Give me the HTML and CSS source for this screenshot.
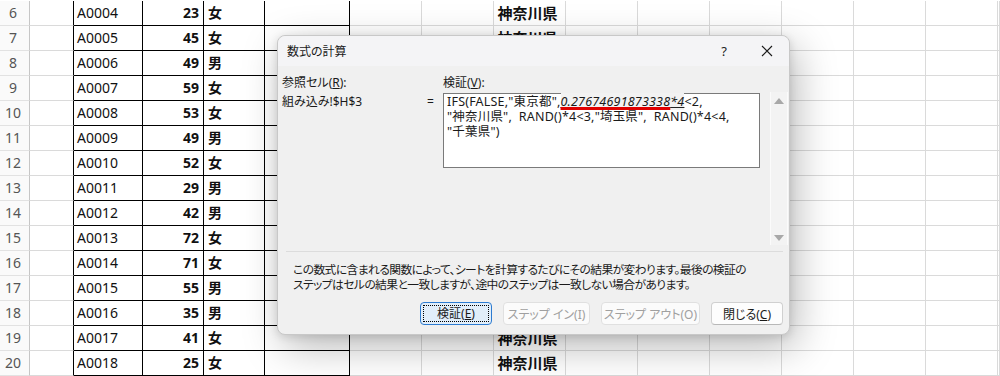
FILE: index.html
```html
<!DOCTYPE html>
<html lang="ja">
<head>
<meta charset="UTF-8">
<title>数式の計算</title>
<link rel="stylesheet" href="styles.css">
</head>
<body>

<div class="sheet">
  <div class="row"><div class="rh">6</div><div class="c"></div><div class="c t id">A0004</div><div class="c t num">23</div><div class="c t sex">女</div><div class="c t last"></div><div class="c"></div><div class="c"></div><div class="c pref">神奈川県</div><div class="c"></div><div class="c"></div><div class="c"></div><div class="c"></div><div class="c"></div><div class="c"></div><div class="c"></div></div>
  <div class="row"><div class="rh">7</div><div class="c"></div><div class="c t id">A0005</div><div class="c t num">45</div><div class="c t sex">女</div><div class="c t last"></div><div class="c"></div><div class="c"></div><div class="c pref">神奈川県</div><div class="c"></div><div class="c"></div><div class="c"></div><div class="c"></div><div class="c"></div><div class="c"></div><div class="c"></div></div>
  <div class="row"><div class="rh">8</div><div class="c"></div><div class="c t id">A0006</div><div class="c t num">49</div><div class="c t sex">男</div><div class="c t last"></div><div class="c"></div><div class="c"></div><div class="c pref"></div><div class="c"></div><div class="c"></div><div class="c"></div><div class="c"></div><div class="c"></div><div class="c"></div><div class="c"></div></div>
  <div class="row"><div class="rh">9</div><div class="c"></div><div class="c t id">A0007</div><div class="c t num">59</div><div class="c t sex">女</div><div class="c t last"></div><div class="c"></div><div class="c"></div><div class="c pref"></div><div class="c"></div><div class="c"></div><div class="c"></div><div class="c"></div><div class="c"></div><div class="c"></div><div class="c"></div></div>
  <div class="row"><div class="rh">10</div><div class="c"></div><div class="c t id">A0008</div><div class="c t num">53</div><div class="c t sex">女</div><div class="c t last"></div><div class="c"></div><div class="c"></div><div class="c pref"></div><div class="c"></div><div class="c"></div><div class="c"></div><div class="c"></div><div class="c"></div><div class="c"></div><div class="c"></div></div>
  <div class="row"><div class="rh">11</div><div class="c"></div><div class="c t id">A0009</div><div class="c t num">49</div><div class="c t sex">男</div><div class="c t last"></div><div class="c"></div><div class="c"></div><div class="c pref"></div><div class="c"></div><div class="c"></div><div class="c"></div><div class="c"></div><div class="c"></div><div class="c"></div><div class="c"></div></div>
  <div class="row"><div class="rh">12</div><div class="c"></div><div class="c t id">A0010</div><div class="c t num">52</div><div class="c t sex">女</div><div class="c t last"></div><div class="c"></div><div class="c"></div><div class="c pref"></div><div class="c"></div><div class="c"></div><div class="c"></div><div class="c"></div><div class="c"></div><div class="c"></div><div class="c"></div></div>
  <div class="row"><div class="rh">13</div><div class="c"></div><div class="c t id">A0011</div><div class="c t num">29</div><div class="c t sex">男</div><div class="c t last"></div><div class="c"></div><div class="c"></div><div class="c pref"></div><div class="c"></div><div class="c"></div><div class="c"></div><div class="c"></div><div class="c"></div><div class="c"></div><div class="c"></div></div>
  <div class="row"><div class="rh">14</div><div class="c"></div><div class="c t id">A0012</div><div class="c t num">42</div><div class="c t sex">男</div><div class="c t last"></div><div class="c"></div><div class="c"></div><div class="c pref"></div><div class="c"></div><div class="c"></div><div class="c"></div><div class="c"></div><div class="c"></div><div class="c"></div><div class="c"></div></div>
  <div class="row"><div class="rh">15</div><div class="c"></div><div class="c t id">A0013</div><div class="c t num">72</div><div class="c t sex">女</div><div class="c t last"></div><div class="c"></div><div class="c"></div><div class="c pref"></div><div class="c"></div><div class="c"></div><div class="c"></div><div class="c"></div><div class="c"></div><div class="c"></div><div class="c"></div></div>
  <div class="row"><div class="rh">16</div><div class="c"></div><div class="c t id">A0014</div><div class="c t num">71</div><div class="c t sex">女</div><div class="c t last"></div><div class="c"></div><div class="c"></div><div class="c pref"></div><div class="c"></div><div class="c"></div><div class="c"></div><div class="c"></div><div class="c"></div><div class="c"></div><div class="c"></div></div>
  <div class="row"><div class="rh">17</div><div class="c"></div><div class="c t id">A0015</div><div class="c t num">55</div><div class="c t sex">男</div><div class="c t last"></div><div class="c"></div><div class="c"></div><div class="c pref"></div><div class="c"></div><div class="c"></div><div class="c"></div><div class="c"></div><div class="c"></div><div class="c"></div><div class="c"></div></div>
  <div class="row"><div class="rh">18</div><div class="c"></div><div class="c t id">A0016</div><div class="c t num">35</div><div class="c t sex">男</div><div class="c t last"></div><div class="c"></div><div class="c"></div><div class="c pref"></div><div class="c"></div><div class="c"></div><div class="c"></div><div class="c"></div><div class="c"></div><div class="c"></div><div class="c"></div></div>
  <div class="row"><div class="rh">19</div><div class="c"></div><div class="c t id">A0017</div><div class="c t num">41</div><div class="c t sex">女</div><div class="c t last"></div><div class="c"></div><div class="c"></div><div class="c pref">神奈川県</div><div class="c"></div><div class="c"></div><div class="c"></div><div class="c"></div><div class="c"></div><div class="c"></div><div class="c"></div></div>
  <div class="row"><div class="rh">20</div><div class="c"></div><div class="c t id">A0018</div><div class="c t num">25</div><div class="c t sex">女</div><div class="c t last"></div><div class="c"></div><div class="c"></div><div class="c pref">神奈川県</div><div class="c"></div><div class="c"></div><div class="c"></div><div class="c"></div><div class="c"></div><div class="c"></div><div class="c"></div></div>
</div>

<div class="dialog">
  <div class="titlebar">
    <span class="title">数式の計算</span>
    <span class="help">?</span>
    <svg class="close" width="12" height="12" viewBox="0 0 12 12"><path d="M1 1L11 11M11 1L1 11" stroke="#1a1a1a" stroke-width="1.1" fill="none"/></svg>
  </div>

  <div class="calc">
    <div class="ref">
      <div class="lbl">参照セル(<u>R</u>):</div>
      <div class="refval">組み込み!$H$3</div>
    </div>
    <div class="eq">=</div>
    <div class="eval">
      <div class="lbl">検証(<u>V</u>):</div>
      <div class="box">IFS(FALSE,"東京都",<span class="cur"><span class="err">0.27674691873338</span>*4</span>&lt;2,<br>"神奈川県",&nbsp; RAND()*4&lt;3,"埼玉県",&nbsp; RAND()*4&lt;4,<br>"千葉県")</div>
    </div>
    <div class="scroll">
      <span class="arr up"></span>
      <span class="arr down"></span>
    </div>
  </div>

  <div class="note">この数式に含まれる関数によって、シートを計算するたびにその結果が変わります。最後の検証の<br>ステップはセルの結果と一致しますが、途中のステップは一致しない場合があります。</div>

  <div class="buttons">
    <button class="btn focus"><span>検証(<u>E</u>)</span></button>
    <button class="btn off w87">ステップ イン(I)</button>
    <button class="btn off w99">ステップ アウト(O)</button>
    <button class="btn">閉じる(<u>C</u>)</button>
  </div>
</div>

</body>
</html>
```

FILE: styles.css
```css
body {
  margin: 0;
  width: 1000px;
  height: 376px;
  overflow: hidden;
  background: #fff;
  font-family: "Noto Sans", "Noto Sans CJK JP", sans-serif;
  position: relative;
}
.sheet {
  padding-top: 1px;
}
.row {
  display: grid;
  grid-template-columns: 30px 44px 69px 61px 61px 85px repeat(9, 72px) 2px;
  height: 25px;
}
.row > div {
  box-sizing: border-box;
  border-right: 1px solid #dadada;
  border-bottom: 1px solid #dadada;
  font-size: 14px;
  line-height: 24px;
  white-space: nowrap;
  overflow: hidden;
}
.row .rh {
  background: #fafafa;
  color: #555;
  border-right-color: #c6c6c6;
  border-bottom-color: #e2e2e2;
  text-align: center;
  padding-right: 3px;
  font-size: 14px;
}
.row .c:nth-child(2) {
  border-right-color: #000;
}
.row .t {
  border-right-color: #000;
  border-bottom-color: #000;
  color: #111;
}
.row .id {
  padding-left: 3px;
}
.row .num {
  text-align: right;
  padding-right: 4px;
  font-weight: bold;
}
.row .sex {
  padding-left: 4px;
  font-weight: bold;
}
.row .pref {
  text-align: center;
  padding-right: 4px;
  font-size: 15px;
  font-weight: bold;
  color: #111;
}

/* dialog */
.dialog {
  position: absolute;
  left: 277px;
  top: 35px;
  width: 513px;
  height: 300px;
  box-sizing: border-box;
  background: #f0f0f0;
  border: 1px solid #c8c8c8;
  border-radius: 8px;
  box-shadow: 6px 12px 40px rgba(0, 0, 0, 0.28), 0 2px 8px rgba(0, 0, 0, 0.12);
  font-size: 12px;
  color: #1a1a1a;
  font-feature-settings: "palt";
  display: flex;
  flex-direction: column;
}
.titlebar {
  height: 30px;
  flex: none;
  display: flex;
  align-items: center;
  background: #f4f4f6;
  border-radius: 8px 8px 0 0;
  padding-left: 9px;
}
.title {
  flex: 1;
  font-size: 12px;
}
.help {
  font-size: 13px;
  margin-right: 34px;
  color: #222;
}
.close {
  margin-right: 16px;
}

.calc {
  display: flex;
  box-sizing: border-box;
  padding: 9px 0 0 4px;
  height: 182px;
  flex: none;
}
.lbl {
  line-height: 15px;
  height: 15px;
  margin-bottom: 3px;
}
.ref {
  width: 145px;
}
.refval {
  line-height: 15px;
  padding-top: 1px;
}
.eq {
  width: 16px;
  padding-top: 19px;
  line-height: 15px;
}
.eval {
  width: 318px;
}
.box {
  box-sizing: border-box;
  width: 317px;
  height: 75px;
  background: #fff;
  border: 1px solid #7a7a7a;
  padding: 0 2px 0 3px;
  font-size: 12.5px;
  letter-spacing: 0.2px;
  line-height: 15px;
  white-space: nowrap;
  font-feature-settings: normal;
}
.cur {
  font-style: italic;
  text-decoration: underline #222 1px;
  text-underline-offset: 1px;
  background: #f2f2f2;
}
.err {
  text-decoration: underline #e00000 3px;
  text-underline-offset: 1px;
}
.scroll {
  margin: 17px 0 0 9px;
  width: 18px;
  height: 153px;
  box-sizing: border-box;
  border-left: 1px solid #fbfbfb;
  border-right: 1px solid #fbfbfb;
  background: #f3f3f3;
  display: flex;
  flex-direction: column;
  justify-content: space-between;
  align-items: center;
  padding: 6px 0 4px;
}
.arr {
  width: 0;
  height: 0;
  border-left: 5px solid transparent;
  border-right: 5px solid transparent;
}
.arr.up {
  border-bottom: 6px solid #a8a8a8;
}
.arr.down {
  border-top: 6px solid #a8a8a8;
}

.note {
  margin: 3px 6px 0 8px;
  border-top: 1px solid #dcdcdc;
  padding: 10px 0 0 7px;
  font-size: 11.8px;
  letter-spacing: -0.6px;
  line-height: 15px;
  height: 30px;
  flex: none;
  white-space: nowrap;
}

.buttons {
  display: flex;
  justify-content: flex-end;
  gap: 11px;
  padding: 10px 6px 0 0;
}
.btn {
  height: 23px;
  width: 72px;
  padding: 0;
  font-family: inherit;
  font-size: 12px;
  font-feature-settings: "palt";
  color: #1a1a1a;
  background: #fdfdfd;
  border: 1px solid #d0d0d0;
  border-bottom-color: #b8b8b8;
  border-radius: 4px;
}
.btn.focus {
  background: #e1eefa;
  border: 1px solid #2d7bd0;
  padding: 2px;
}
.btn.focus span {
  display: block;
  height: 100%;
  box-sizing: border-box;
  border: 1px dotted #000;
  line-height: 15px;
}
.btn.off {
  color: #a0a0a0;
  background: #fbfbfb;
  border-color: #e0e0e0;
}
.w87 {
  width: 87px;
}
.w99 {
  width: 99px;
}
```
